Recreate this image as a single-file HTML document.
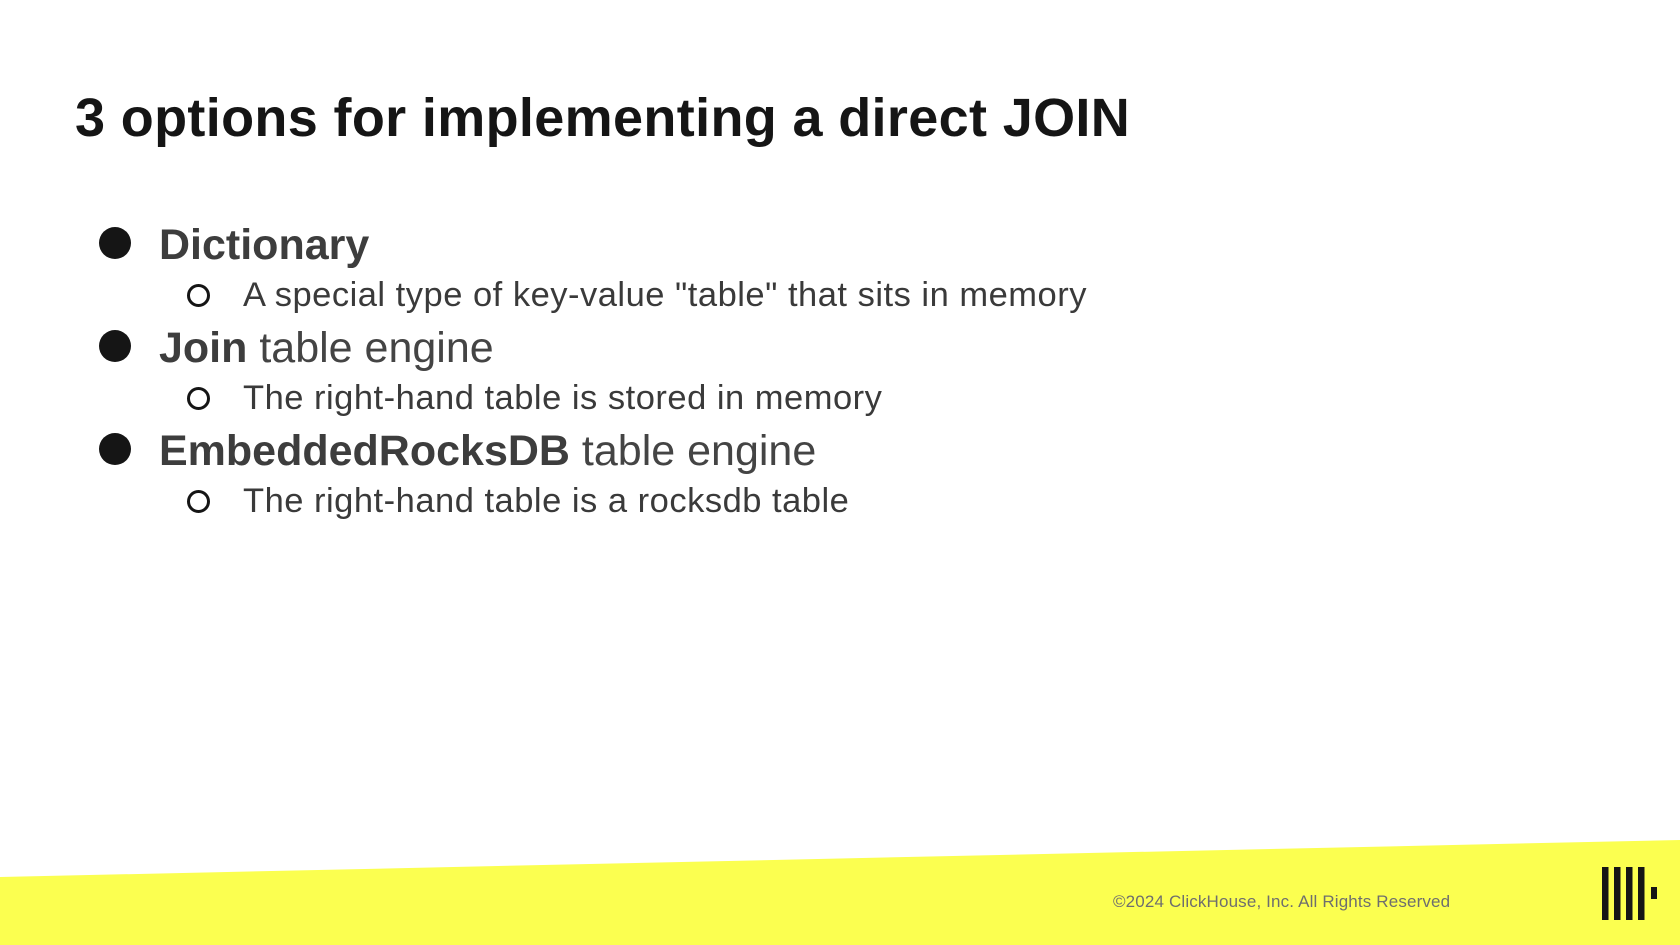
<!DOCTYPE html>
<html><head><meta charset="utf-8"><style>
html,body{margin:0;padding:0;background:#fff;}
body{width:1680px;height:945px;position:relative;overflow:hidden;font-family:"Liberation Sans",sans-serif;}
.t{position:absolute;left:75px;top:87px;font-size:54px;font-weight:bold;color:#151515;letter-spacing:0.35px;white-space:nowrap;}
.m{position:absolute;left:159px;font-size:43px;color:#444;white-space:nowrap;line-height:1;}
.m b{color:#3d3d3d;}
.s{position:absolute;left:243px;font-size:34.5px;color:#3a3a3a;white-space:nowrap;line-height:1;letter-spacing:0.5px;}
.bd{position:absolute;left:99px;width:32px;height:32px;border-radius:50%;background:#151515;}
.bo{position:absolute;left:187px;width:17px;height:17px;border-radius:50%;border:3px solid #151515;}
.f{position:absolute;left:1113px;top:892px;font-size:17px;color:#6e6e6e;white-space:nowrap;letter-spacing:0.15px;}
</style></head><body>
<div class="t">3 options for implementing a direct JOIN</div>

<div class="bd" style="top:227px"></div>
<div class="m" style="top:224px"><b>Dictionary</b></div>
<div class="bo" style="top:284px"></div>
<div class="s" style="top:278px">A special type of key-value "table" that sits in memory</div>

<div class="bd" style="top:330px"></div>
<div class="m" style="top:327px"><b>Join</b> table engine</div>
<div class="bo" style="top:387px"></div>
<div class="s" style="top:381px">The right-hand table is stored in memory</div>

<div class="bd" style="top:433px"></div>
<div class="m" style="top:430px"><b>EmbeddedRocksDB</b> table engine</div>
<div class="bo" style="top:490px"></div>
<div class="s" style="top:484px">The right-hand table is a rocksdb table</div>

<svg style="position:absolute;left:0;top:0" width="1680" height="945">
<polygon points="0,877 1680,840 1680,945 0,945" fill="#fbff50"/>
<rect x="1602" y="867" width="6.5" height="53" fill="#151515"/>
<rect x="1614" y="867" width="6.5" height="53" fill="#151515"/>
<rect x="1626" y="867" width="6.5" height="53" fill="#151515"/>
<rect x="1638" y="867" width="6.5" height="53" fill="#151515"/>
<rect x="1651" y="887" width="6" height="12" fill="#151515"/>
</svg>
<div class="f">©2024 ClickHouse, Inc. All Rights Reserved</div>
</body></html>
